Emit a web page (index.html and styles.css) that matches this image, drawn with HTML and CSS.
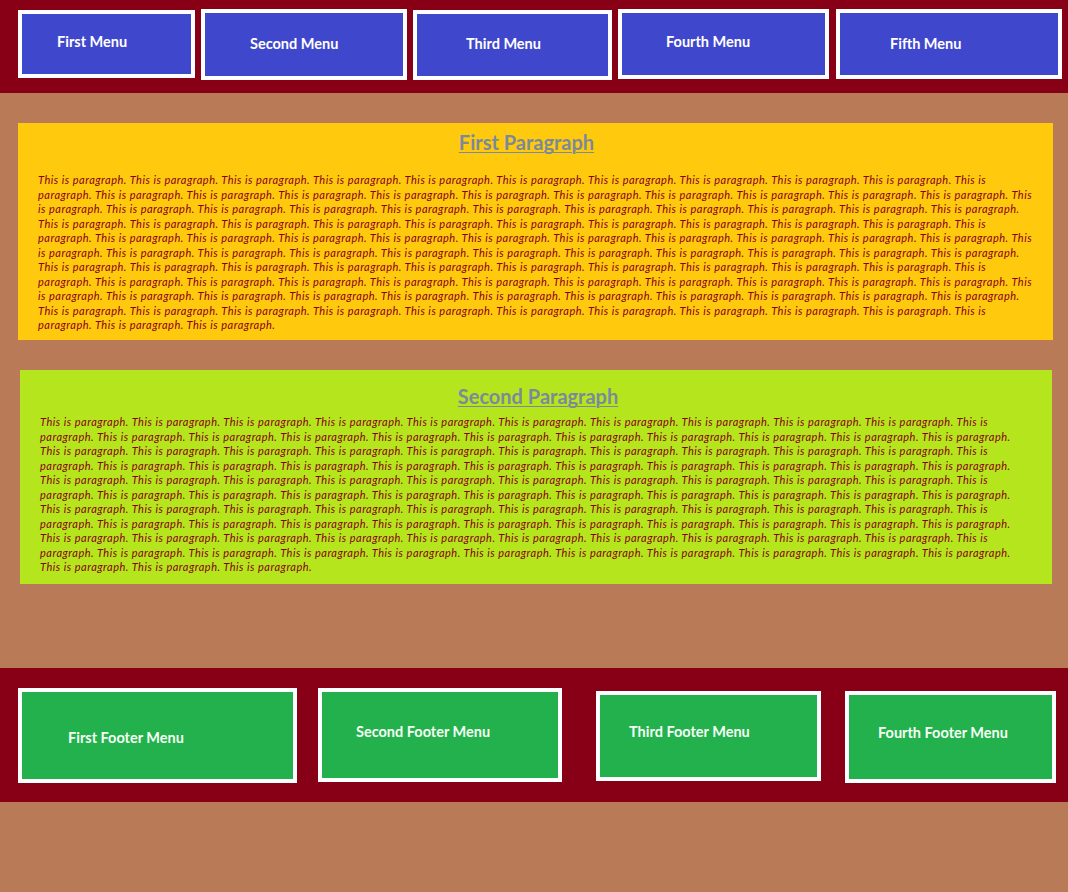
FILE: index.html
```html
<!DOCTYPE html>
<html lang="en">
<head>
<meta charset="utf-8">
<title>Menus and Paragraphs</title>
<link rel="stylesheet" href="styles.css">
</head>
<body>
<header class="topbar">
  <div class="menu m1">First Menu</div>
  <div class="menu m2">Second Menu</div>
  <div class="menu m3">Third Menu</div>
  <div class="menu m4">Fourth Menu</div>
  <div class="menu m5">Fifth Menu</div>
</header>

<main class="content">
  <section class="card card-yellow">
    <h2 class="card-title">First Paragraph</h2>
    <p class="card-text">This is paragraph. This is paragraph. This is paragraph. This is paragraph. This is paragraph. This is paragraph. This is paragraph. This is paragraph. This is paragraph. This is paragraph.
This is paragraph. This is paragraph. This is paragraph. This is paragraph. This is paragraph. This is paragraph. This is paragraph. This is paragraph. This is paragraph. This is paragraph.
This is paragraph. This is paragraph. This is paragraph. This is paragraph. This is paragraph. This is paragraph. This is paragraph. This is paragraph. This is paragraph. This is paragraph.
This is paragraph. This is paragraph. This is paragraph. This is paragraph. This is paragraph. This is paragraph. This is paragraph. This is paragraph. This is paragraph. This is paragraph.
This is paragraph. This is paragraph. This is paragraph. This is paragraph. This is paragraph. This is paragraph. This is paragraph. This is paragraph. This is paragraph. This is paragraph.
This is paragraph. This is paragraph. This is paragraph. This is paragraph. This is paragraph. This is paragraph. This is paragraph. This is paragraph. This is paragraph. This is paragraph.
This is paragraph. This is paragraph. This is paragraph. This is paragraph. This is paragraph. This is paragraph. This is paragraph. This is paragraph. This is paragraph. This is paragraph.
This is paragraph. This is paragraph. This is paragraph. This is paragraph. This is paragraph. This is paragraph. This is paragraph. This is paragraph. This is paragraph. This is paragraph.
This is paragraph. This is paragraph. This is paragraph. This is paragraph. This is paragraph. This is paragraph. This is paragraph. This is paragraph. This is paragraph. This is paragraph.
This is paragraph. This is paragraph. This is paragraph. This is paragraph. This is paragraph. This is paragraph. This is paragraph. This is paragraph. This is paragraph. This is paragraph.
This is paragraph. This is paragraph. This is paragraph. This is paragraph. This is paragraph. This is paragraph. This is paragraph. This is paragraph. This is paragraph.</p>
  </section>

  <section class="card card-lime">
    <h2 class="card-title">Second Paragraph</h2>
    <p class="card-text">This is paragraph. This is paragraph. This is paragraph. This is paragraph. This is paragraph. This is paragraph. This is paragraph. This is paragraph. This is paragraph. This is paragraph.
This is paragraph. This is paragraph. This is paragraph. This is paragraph. This is paragraph. This is paragraph. This is paragraph. This is paragraph. This is paragraph. This is paragraph.
This is paragraph. This is paragraph. This is paragraph. This is paragraph. This is paragraph. This is paragraph. This is paragraph. This is paragraph. This is paragraph. This is paragraph.
This is paragraph. This is paragraph. This is paragraph. This is paragraph. This is paragraph. This is paragraph. This is paragraph. This is paragraph. This is paragraph. This is paragraph.
This is paragraph. This is paragraph. This is paragraph. This is paragraph. This is paragraph. This is paragraph. This is paragraph. This is paragraph. This is paragraph. This is paragraph.
This is paragraph. This is paragraph. This is paragraph. This is paragraph. This is paragraph. This is paragraph. This is paragraph. This is paragraph. This is paragraph. This is paragraph.
This is paragraph. This is paragraph. This is paragraph. This is paragraph. This is paragraph. This is paragraph. This is paragraph. This is paragraph. This is paragraph. This is paragraph.
This is paragraph. This is paragraph. This is paragraph. This is paragraph. This is paragraph. This is paragraph. This is paragraph. This is paragraph. This is paragraph. This is paragraph.
This is paragraph. This is paragraph. This is paragraph. This is paragraph. This is paragraph. This is paragraph. This is paragraph. This is paragraph. This is paragraph. This is paragraph.
This is paragraph. This is paragraph. This is paragraph. This is paragraph. This is paragraph. This is paragraph. This is paragraph. This is paragraph. This is paragraph. This is paragraph.
This is paragraph. This is paragraph. This is paragraph. This is paragraph. This is paragraph. This is paragraph. This is paragraph. This is paragraph.</p>
  </section>
</main>

<footer class="footbar">
  <div class="fmenu f1">First Footer Menu</div>
  <div class="fmenu f2">Second Footer Menu</div>
  <div class="fmenu f3">Third Footer Menu</div>
  <div class="fmenu f4">Fourth Footer Menu</div>
</footer>
</body>
</html>
```

FILE: styles.css
```css
html {
  background: #b97a57;
}

body {
  margin: 0;
  min-height: 892px;
  background: #b97a57;
  font-family: Lato, "Open Sans", sans-serif;
}

/* ---------- top menu bar ---------- */
.topbar {
  display: flex;
  align-items: flex-start;
  gap: 6px;
  height: 93px;
  box-sizing: border-box;
  padding: 9px 0 0 18px;
  background: #880015;
}

.menu {
  box-sizing: border-box;
  border: 4px solid #ffffff;
  background: #3f48cc;
  color: #ffffff;
  font-weight: 700;
  font-size: 14.5px;
  line-height: 18px;
  white-space: nowrap;
}

.m1 { width: 177px; height: 68px; margin-top: 1px; padding: 19px 0 0 35px; }
.m2 { width: 206px; height: 71px; padding: 22px 0 0 45px; }
.m3 { width: 199px; height: 70px; margin-top: 1px; padding: 21px 0 0 49px; }
.m4 { width: 211px; height: 70px; padding: 20px 0 0 44px; }
.m5 { width: 226px; height: 70px; margin-left: 1px; padding: 22px 0 0 50px; }

/* ---------- content ---------- */
.content {
  display: flex;
  flex-direction: column;
  gap: 30px;
  padding: 30px 0 84px 0;
}

.card {
  box-sizing: border-box;
}

.card-title {
  margin: 0;
  text-align: center;
  font-size: 20px;
  line-height: 24px;
  font-weight: 700;
  color: #7a8a9c;
  text-decoration: underline;
  text-decoration-thickness: 1px;
  text-underline-offset: 2px;
}

.card-text {
  margin: 0;
  font-style: italic;
  font-size: 11px;
  letter-spacing: 0.5px;
  line-height: 14.55px;
  color: #880015;
}

.card-yellow {
  margin-left: 18px;
  width: 1035px;
  height: 217px;
  padding: 7px 20px 7px 20px;
  background: #ffc90e;
}

.card-yellow .card-title {
  padding-right: 18px;
  margin-bottom: 19px;
}

.card-lime {
  margin-left: 20px;
  width: 1032px;
  height: 214px;
  padding: 14px 37px 9px 20px;
  background: #b5e61d;
}

.card-lime .card-title {
  padding-left: 21px;
  margin-bottom: 7px;
}

/* ---------- footer ---------- */
.footbar {
  display: flex;
  align-items: flex-start;
  height: 134px;
  box-sizing: border-box;
  padding: 20px 0 0 18px;
  background: #880015;
}

.fmenu {
  box-sizing: border-box;
  border: 4px solid #ffffff;
  background: #22b14c;
  color: #f4fff4;
  font-weight: 700;
  font-size: 14.5px;
  line-height: 18px;
  white-space: nowrap;
}

.f1 { width: 279px; height: 95px; padding: 37px 0 0 46px; }
.f2 { width: 244px; height: 94px; margin-left: 21px; padding: 31px 0 0 34px; }
.f3 { width: 225px; height: 90px; margin-left: 34px; margin-top: 3px; padding: 28px 0 0 29px; }
.f4 { width: 211px; height: 92px; margin-left: 24px; margin-top: 3px; padding: 29px 0 0 29px; }
```
